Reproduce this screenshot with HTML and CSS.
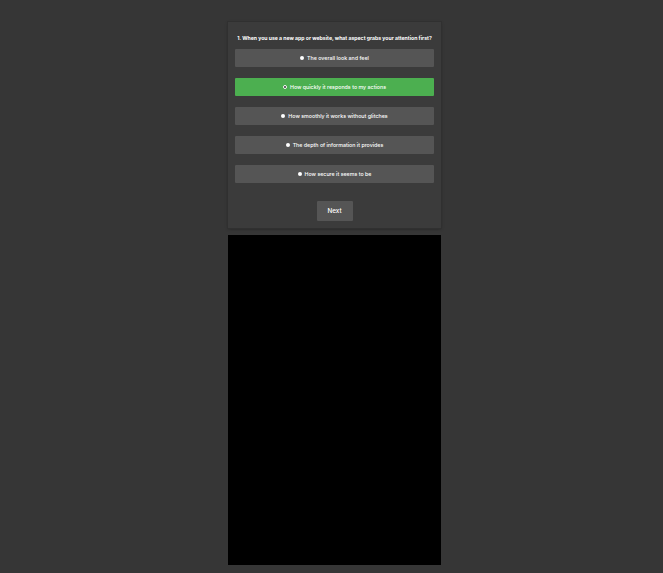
FILE: index.html
```html
<!DOCTYPE html>
<html>
<head>
<meta charset="utf-8">
<link rel="stylesheet" href="styles.css">
</head>
<body>
<div class="page">
  <div class="column">
    <div class="card">
      <div class="question">1. When you use a new app or website, what aspect grabs your attention first?</div>
      <div class="options">
        <div class="option"><span class="radio"></span>The overall look and feel</div>
        <div class="option selected"><span class="radio checked"></span>How quickly it responds to my actions</div>
        <div class="option"><span class="radio"></span>How smoothly it works without glitches</div>
        <div class="option"><span class="radio"></span>The depth of information it provides</div>
        <div class="option"><span class="radio"></span>How secure it seems to be</div>
      </div>
      <div class="actions"><button class="next">Next</button></div>
    </div>
    <div class="screen"></div>
  </div>
</div>
</body>
</html>
```
FILE: styles.css
```css
html, body {
  margin: 0;
  padding: 0;
  background: #363636;
  height: 100%;
}
body {
  font-family: "Inter", "DejaVu Sans", sans-serif;
  color: #ffffff;
}
.page {
  display: flex;
  justify-content: center;
  padding-left: 6px;
  padding-top: 22px;
}
.column {
  width: 213px;
  display: flex;
  flex-direction: column;
  gap: 7px;
}
.card {
  background: #3b3b3b;
  box-shadow: 0 0 0 1px #303030, 0 1px 3px rgba(0,0,0,0.35);
  padding: 13px 7px 7px;
  display: flex;
  flex-direction: column;
}
.question {
  font-size: 5.15px;
  font-weight: 700;
  text-align: center;
  line-height: 7px;
  height: 7px;
  white-space: nowrap;
  margin-bottom: 7px;
}
.options {
  display: flex;
  flex-direction: column;
  gap: 11px;
}
.option {
  height: 18px;
  background: #555555;
  border-radius: 1px;
  display: flex;
  align-items: center;
  justify-content: center;
  font-size: 5.3px;
  font-weight: 500;
  gap: 3px;
  white-space: nowrap;
}
.option.selected {
  background: #4caf50;
}
.radio {
  width: 4px;
  height: 4px;
  border-radius: 50%;
  background: #ffffff;
  flex: none;
}
.radio.checked {
  box-sizing: border-box;
  border: 1.2px solid #ffffff;
  background: #2a2a2a;
}
.actions {
  display: flex;
  justify-content: center;
  margin-top: 18px;
}
.next {
  width: 36px;
  height: 20px;
  background: #555555;
  color: #ffffff;
  border: none;
  border-radius: 1px;
  font-family: "Inter", "DejaVu Sans", sans-serif;
  font-size: 6.3px;
  font-weight: 500;
  padding: 0;
}
.screen {
  height: 330px;
  background: #000000;
}
```
